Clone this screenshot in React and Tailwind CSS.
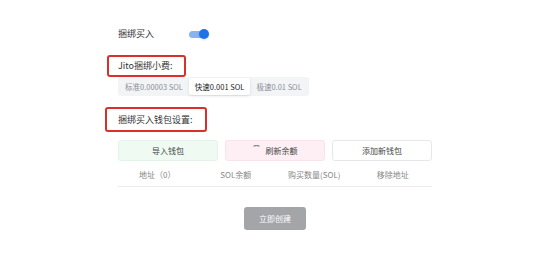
import React, { useState } from 'react';

const font = { fontFamily: '"Noto Sans CJK SC", "Noto Sans", sans-serif' };

export default function App() {
  const [on, setOn] = useState(true);
  const [tip, setTip] = useState('fast');
  const tips = [
    { k: 'std', label: '标准0.00003 SOL' },
    { k: 'fast', label: '快速0.001 SOL' },
    { k: 'max', label: '极速0.01 SOL' },
  ];

  return (
    <div className="w-[555px] h-[264px] bg-white overflow-hidden" style={font}>
      <div className="flex flex-col pl-[118px] pt-[27px] w-[432px]">
        <div className="flex items-center h-[14px]">
          <span className="text-[9px] text-[#333] w-[71px]">捆绑买入</span>
          <button onClick={() => setOn(!on)} className="relative w-[22px] h-[12px] flex items-center">
            <span className={`block w-[18px] h-[7px] rounded-full ${on ? 'bg-[#8ab4ee]' : 'bg-gray-300'}`} />
            <span className={`absolute top-[1px] w-[10px] h-[10px] rounded-full shadow-sm ${on ? 'left-[10px] bg-[#1a73e8]' : 'left-0 bg-white'}`} />
          </button>
        </div>

        <div className="mt-[14px] -ml-[11px] w-[79px] h-[22px] border-2 border-[#d9302c] rounded-[3px] flex items-center pl-[9px]">
          <span className="text-[9px] text-[#333] whitespace-nowrap">Jito捆绑小费:</span>
        </div>

        <div className="flex self-start h-[19px] bg-[#f3f4f6] rounded-[3px] p-[1px]">
          {tips.map((t) => (
            <button
              key={t.k}
              onClick={() => setTip(t.k)}
              className={`flex items-center justify-center whitespace-nowrap px-[6px] text-[7.5px] rounded-[2px] ${tip === t.k ? 'bg-white text-[#222] shadow-sm' : 'text-[#8a8f98]'}`}
            >
              {t.label}
            </button>
          ))}
        </div>

        <div className="mt-[11px] -ml-[13px] w-[102px] h-[25px] border-2 border-[#d9302c] rounded-[3px] flex items-center pl-[11px]">
          <span className="text-[9px] text-[#333] whitespace-nowrap">捆绑买入钱包设置:</span>
        </div>

        <div className="mt-[8px] flex gap-[7px] h-[21px]">
          <button className="w-[100px] rounded-[3px] bg-[#eefaf2] border border-[#e3f3e8] text-[8px] text-[#444]">导入钱包</button>
          <button className="w-[100px] rounded-[3px] bg-[#fdeff3] border border-[#f8e4ea] text-[8px] text-[#444] flex items-center justify-center gap-[6px]">
            <svg width="7" height="7" viewBox="0 0 7 7" className="-mt-[5px]">
              <path d="M0.5 1 Q3.5 0.2 6.5 1" stroke="#555" strokeWidth="0.9" fill="none" />
            </svg>
            刷新余额
          </button>
          <button className="w-[100px] rounded-[3px] bg-white border border-[#e5e7eb] text-[8px] text-[#444]">添加新钱包</button>
        </div>

        <div className="grid grid-cols-4 h-[26px] pt-[3px] items-center border-b border-[#ececec] text-[8px] text-[#888] text-center">
          <span>地址（0）</span>
          <span>SOL余额</span>
          <span>购买数量(SOL)</span>
          <span>移除地址</span>
        </div>

        <div className="flex justify-center mt-[20px]">
          <button className="w-[62px] h-[23px] rounded-[3px] bg-[#a3a5a9] text-white text-[8px]">立即创建</button>
        </div>
      </div>
    </div>
  );
}
